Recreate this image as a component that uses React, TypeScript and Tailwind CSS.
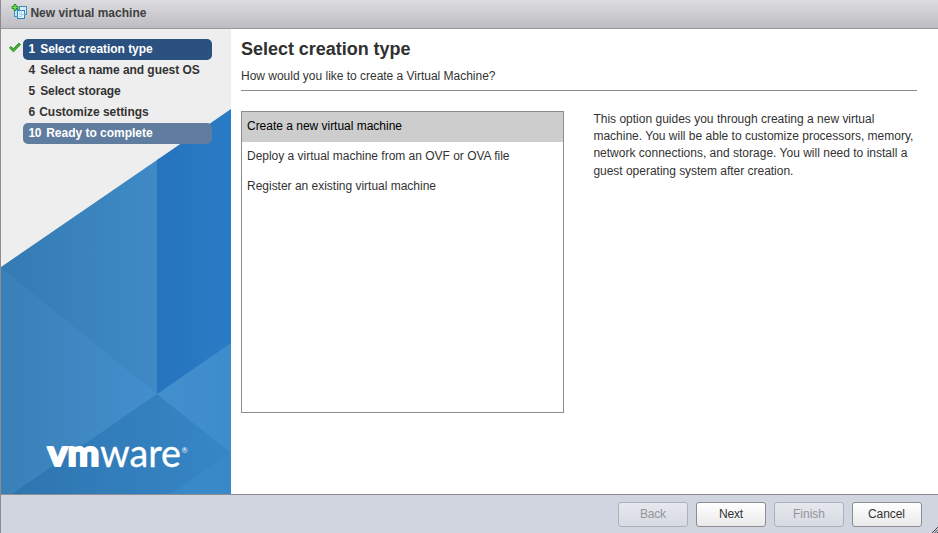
import React from "react";

const steps = [
  { n: "1", label: "Select creation type", nw: 6, w: 112.5, gap: "w-[12px]", state: "active" },
  { n: "4", label: "Select a name and guest OS", nw: 6, w: 159.5, gap: "w-[12px]", state: "idle" },
  { n: "5", label: "Select storage", nw: 6, w: 80.5, gap: "w-[12px]", state: "idle" },
  { n: "6", label: "Customize settings", nw: 6, w: 109.5, gap: "w-[11px]", state: "idle" },
  { n: "10", label: "Ready to complete", nw: 13, w: 106.5, gap: "w-[17.5px]", state: "last" },
];

const stepStyles: Record<string, string> = {
  active: "bg-[#2a5180] text-white",
  idle: "text-[#333]",
  last: "bg-[#607d9f] text-white",
};

type LineProps = { text: string; w: number; size?: number; bold?: boolean; dx?: number };

/* One line of text fitted to a fixed width. */
function Line({ text, w, size = 12, bold = false, dx = 0 }: LineProps) {
  return (
    <svg width={w + 4} height={size + 6} className="block shrink-0 overflow-visible">
      <text x={dx} y={size} textLength={w} fontSize={size} fontWeight={bold ? 700 : 400} fill="currentColor">
        {text}
      </text>
    </svg>
  );
}

function NewVmIcon() {
  return (
    <svg width="17" height="16" viewBox="0 0 17 16" className="block shrink-0">
      <rect x="3.500" y="5.500" width="7" height="7" fill="#bfe3f6" stroke="#3f8fc2" />
      <rect x="8.500" y="2.500" width="7" height="8" fill="#d4ecfa" stroke="#3f8fc2" />
      <rect x="6.500" y="6.500" width="7" height="8" fill="#e8f7ff" stroke="#2d84bb" />
      <path d="M8.500 6.500v4h5M10.500 6.500v6H6.500" fill="none" stroke="#a5d4ee" />
      <path d="M3 .5h2v2h2v2h-2v2h-2v-2h-2v-2h2z" fill="#7be05c" stroke="#25941f" />
    </svg>
  );
}

function Backdrop() {
  return (
    <svg className="absolute inset-0" width="230" height="465" viewBox="1 29 230 465">
      <defs>
        <linearGradient id="upper"><stop offset="0" stopColor="#347bb3" /><stop offset="1" stopColor="#3f8ac6" /></linearGradient>
        <linearGradient id="deep"><stop offset="0" stopColor="#2574bd" /><stop offset="1" stopColor="#2a7bc5" /></linearGradient>
        <linearGradient id="left"><stop offset="0" stopColor="#3a80b7" /><stop offset="1" stopColor="#438fce" /></linearGradient>
        <linearGradient id="floor"><stop offset="0" stopColor="#2e75b0" /><stop offset="1" stopColor="#3686c6" /></linearGradient>
        <linearGradient id="right"><stop offset="0" stopColor="#428fcd" /><stop offset="1" stopColor="#3d8ccc" /></linearGradient>
      </defs>
      <path d="M1 267 157 160 160 158V396H1Z" fill="url(#upper)" />
      <path d="M157 160 231 109V400H157Z" fill="url(#deep)" />
      <path d="M1 268 157 394 160 398V494H1Z" fill="url(#left)" />
      <path d="M157 394 231 343V460H157Z" fill="url(#right)" />
      <path d="M157 394 231 453V494H12Z" fill="url(#floor)" />
      <path d="M231 453V494H170Z" fill="#3989c9" />
    </svg>
  );
}

function Logo() {
  return (
    <svg width="144" height="44" viewBox="45 431 144 44" className="block overflow-visible" fill="#fff" fontFamily="Lato, sans-serif" aria-label="vmware">
      <text x="47.500" y="466" fontSize="35.500" fontWeight="700" textLength="52" lengthAdjust="spacingAndGlyphs" stroke="#fff" strokeWidth="2.200" strokeLinejoin="round">vm</text>
      <text x="100" y="466.500" fontSize="38.500" textLength="81" lengthAdjust="spacingAndGlyphs" stroke="#fff" strokeWidth=".3" strokeLinejoin="round">ware</text>
      <text x="181.500" y="453" fontSize="7.500">®</text>
    </svg>
  );
}

function FooterButton({ label, w, disabled = false }: { label: string; w: number; disabled?: boolean }) {
  return (
    <button
      disabled={disabled}
      className={
        "flex h-[25px] w-[70px] justify-center rounded-[3px] border pt-[3px] pl-[3px] " +
        (disabled
          ? "border-[#adb2ba] bg-linear-to-b from-[#e5e8ed] to-[#d7dbe2] text-[#90959c]"
          : "border-[#8b8d91] bg-linear-to-b from-white to-[#e9e9e9] text-[#333]")
      }
    >
      <Line text={label} w={w} />
    </button>
  );
}

export default function App() {
  return (
    <div className="flex h-[533px] w-[938px] flex-col overflow-hidden border-l border-[#8c8c90] bg-white font-['Liberation_Sans',Arial,sans-serif] text-[12px] text-[#333]">
      <header className="flex h-[29px] shrink-0 items-start border-b border-[#98989c] bg-linear-to-b from-[#dddde1] to-[#bcbcc1] pt-[4px] pl-[10px] text-[#404040]">
        <NewVmIcon />
        <div className="mt-[1px] ml-[2px]"><Line text="New virtual machine" w={116} bold dx={0.4} /></div>
      </header>
      <div className="flex h-[465px] shrink-0">
        <aside className="relative w-[230px] shrink-0 bg-[#eeeeee]">
          <Backdrop />
          <div className="relative flex h-full flex-col justify-between pt-[10px] pb-[19px]">
            <ol>
              {steps.map((s) => (
                <li key={s.n} className="flex h-[21px]">
                  <span className="w-[22px] pt-[3px] pl-[7px]">
                    {s.state === "active" && (
                      <svg width="14" height="12" viewBox="0 0 14 12" className="block">
                        <path d="M1.500 6 3 4.500 5.300 6.800 10.800 1.200 12.500 2.500 5.500 9.800Z" fill="#47b52e" stroke="#2b8b20" strokeLinejoin="round" />
                      </svg>
                    )}
                  </span>
                  <span className={"flex w-[189px] rounded-[5px] pt-[2px] pl-[5px] " + stepStyles[s.state]}>
                    <span className={"shrink-0 " + s.gap}><Line text={s.n} w={s.nw} bold dx={0.4} /></span>
                    <Line text={s.label} w={s.w} bold dx={0.2} />
                  </span>
                </li>
              ))}
            </ol>
            <div className="pl-[44px]"><Logo /></div>
          </div>
        </aside>
        <main className="flex-1 pt-[8px] pr-[21px] pl-[10px]">
          <h1 className="text-[#303030]"><Line text="Select creation type" w={169.5} size={18} bold /></h1>
          <div className="mt-[7px] flex h-[23px] border-b border-[#8c8c8c]">
            <Line text="How would you like to create a Virtual Machine?" w={254.5} />
          </div>
          <div className="mt-[20px] flex">
            <ul className="h-[302px] w-[323px] shrink-0 border border-[#8c8c8c]">
              <li className="h-[30px] bg-[#cdcdcd] pt-[6px] pl-[5px] text-black"><Line text="Create a new virtual machine" w={155} /></li>
              <li className="h-[30px] pt-[6px] pl-[5px]"><Line text="Deploy a virtual machine from an OVF or OVA file" w={262.5} /></li>
              <li className="h-[30px] pt-[6px] pl-[5px]"><Line text="Register an existing virtual machine" w={189} /></li>
            </ul>
            <div className="ml-[29px] flex flex-col">
              <div className="h-[17px]"><Line text="This option guides you through creating a new virtual" w={281} dx={0.4} /></div>
              <div className="h-[17px]"><Line text="machine. You will be able to customize processors, memory," w={320} dx={0.4} /></div>
              <div className="h-[18px]"><Line text="network connections, and storage. You will need to install a" w={314} dx={0.4} /></div>
              <div className="h-[17px]"><Line text="guest operating system after creation." w={200} dx={0.4} /></div>
            </div>
          </div>
        </main>
      </div>
      <footer className="relative flex flex-1 justify-end gap-[8px] border-t border-[#8c8e92] bg-[#d1d5df] pt-[7px] pr-[16px]">
        <FooterButton label="Back" w={26} disabled />
        <FooterButton label="Next" w={24} />
        <FooterButton label="Finish" w={32} disabled />
        <FooterButton label="Cancel" w={37} />
        <svg width="6" height="6" className="absolute right-0 bottom-0">
          <path d="M0 6 6 0M2.500 6 6 2.500M5 6 6 5" stroke="#444" />
        </svg>
      </footer>
    </div>
  );
}
